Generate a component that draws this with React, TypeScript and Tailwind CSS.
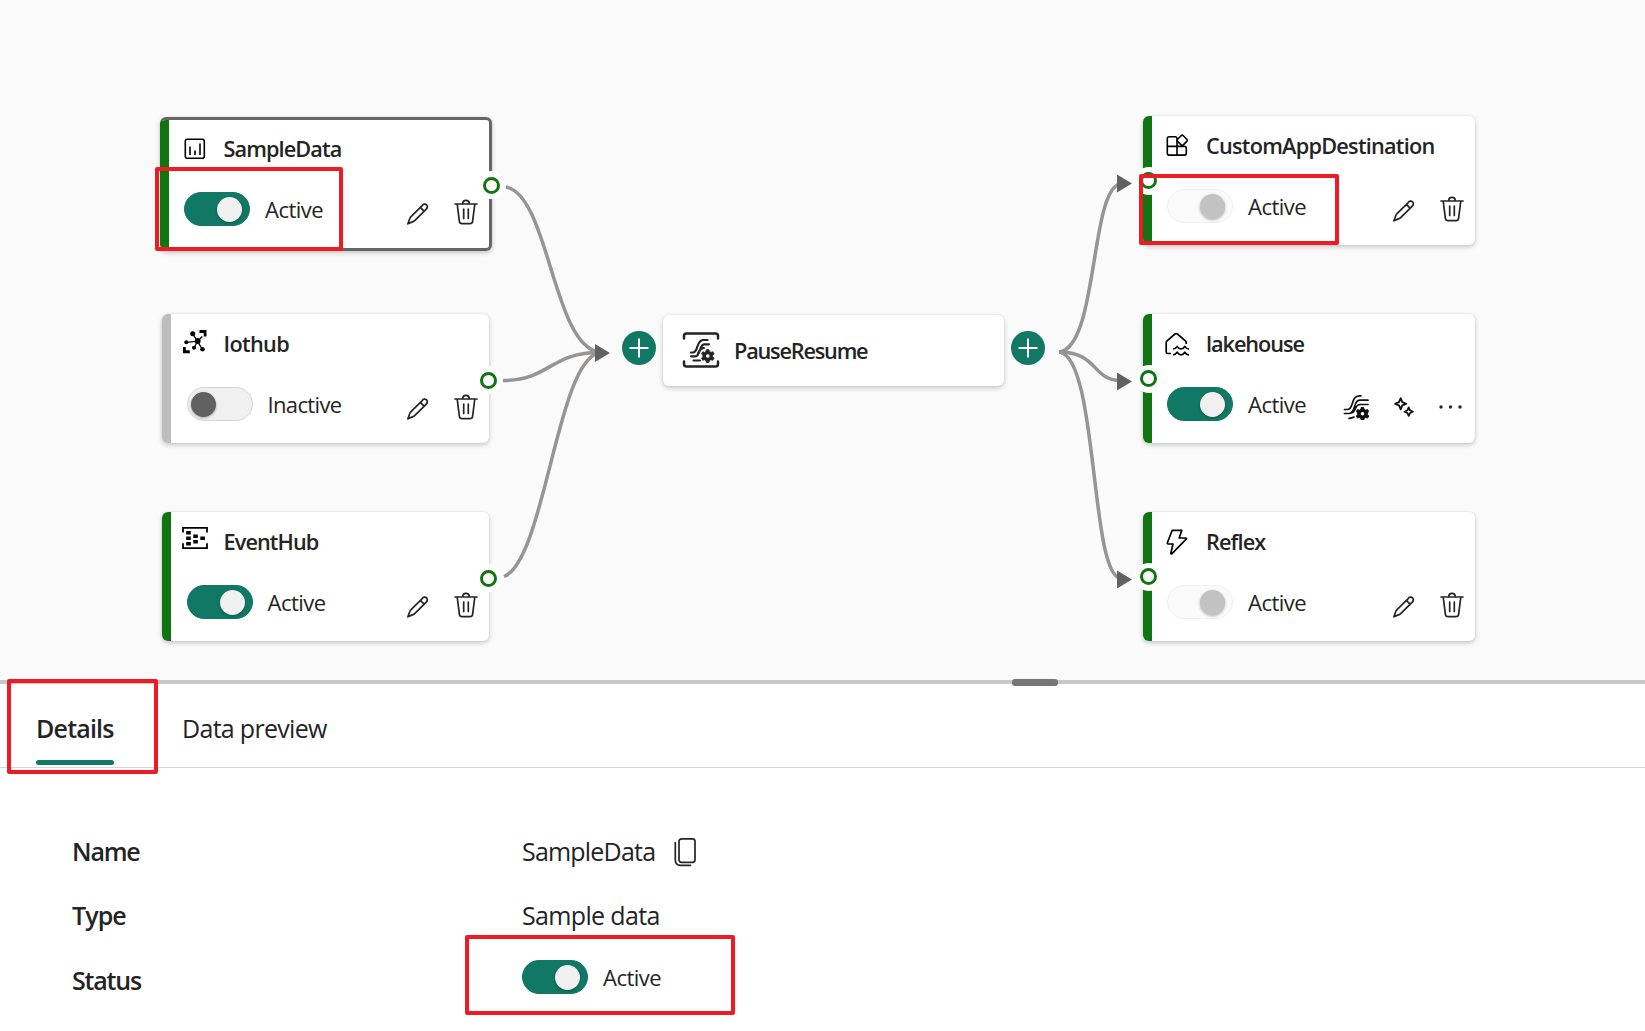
import React from "react";

type P = { className?: string };

const Pencil = ({ className }: P) => (
  <svg viewBox="0 0 22 22" width="22" height="22" className={`fill-none stroke-[#242424] ${className ?? ""}`} strokeWidth="1.7" strokeLinejoin="round">
    <path d="M15.2 2.6c1.1-1.6 3-2 4.3-.8 1.3 1.2 1.1 3-.2 4.3L7.7 17.6c-.5.5-1 .8-1.7 1L.9 20.8l1.9-5.3c.2-.7.5-1.1 1-1.6z" />
    <path d="M13.4 4.4l3.9 3.9" />
  </svg>
);

const Trash = ({ className }: P) => (
  <svg viewBox="0 0 24 26" width="24" height="26" className={`fill-none stroke-[#242424] ${className ?? ""}`} strokeWidth="1.7" strokeLinecap="round" strokeLinejoin="round">
    <path d="M1 5h22M8.7 4.8c0-2 1.4-3.4 3.3-3.4s3.3 1.4 3.3 3.4M3.2 5l2.2 17.3c.2 1.5 1.1 2.3 2.600 2.300h8c1.500 0 2.400-.8 2.600-2.300L20.800 5M9.700 10v9.500M14.300 10v9.500" />
  </svg>
);

const ChartIcon = () => (
  <svg viewBox="0 0 26 26" width="26" height="26" className="fill-none stroke-black" strokeWidth="1.6">
    <rect x="3.3" y="3.3" width="19" height="19" rx="2" />
    <path d="M8 10.5v8.5M13 14.5v4.5M18 7.5v11.5" />
  </svg>
);

const HubIcon = () => (
  <svg viewBox="0 0 26 26" width="26" height="26" className="fill-none stroke-black" strokeWidth="1.3">
    <path d="M10.5 4.5L15.5 12.3L4.5 13.3M15.5 12.3L12 19M15.5 12.3L20.5 20.5M15.5 12.3l4.8-4.8" />
    <g className="fill-black stroke-none">
      <circle cx="10.7" cy="4.7" r="2.5" /><circle cx="15.7" cy="12" r="2.9" /><circle cx="4.3" cy="13.3" r="2" />
      <circle cx="12" cy="18.8" r="2" /><circle cx="20.5" cy="20.3" r="2.3" />
      <path d="M17.5 1h7v6.5h-2.8V4h-4.2zM1 18h2.8v3.2h4v3H1z" />
    </g>
  </svg>
);

const EventIcon = () => (
  <svg viewBox="0 0 26 24" width="26" height="24" className="fill-none stroke-black" strokeWidth="1.8">
    <path d="M1 6.5V1.9h24v4.6M1 17.2v4.9h24v-4.9" />
    <path className="fill-black stroke-none" d="M4.2 5h4.6v3.4H4.2zM4.2 10.5h4.6v3.5H4.2zM4.2 16h4.6v3.4H4.2zM11.3 8.5h4.5v3.4h-4.5zM11.3 14h4.5v3.4h-4.5zM18.3 10.5h4.6v3.500h-4.600z" />
  </svg>
);

const gear = "M16.9 11.6h2.3l.5 1.8 1.5.8 1.9-.6 1.1 2-1.3 1.4v1.6l1.3 1.4-1.1 2-1.9-.5-1.5.8-.5 1.9h-2.3l-.6-1.9-1.4-.8-1.9.5-1.1-2 1.3-1.4v-1.6l-1.3-1.4 1.1-2 1.9.6 1.4-.8z";

const Gear = ({ at, tone }: { at: string; tone: string }) => (
  <g transform={at}>
    <path className={tone} strokeWidth="1" strokeLinejoin="round" d={gear} />
    <circle cx="18.05" cy="17.8" r="1.8" className="fill-white stroke-none" />
  </g>
);

const StreamIcon = () => (
  <svg viewBox="0 0 26 26" width="26" height="26" className="fill-none stroke-[#111]" strokeWidth="1.7" strokeLinecap="round">
    <path d="M1.500 15.500h3c6.500 0 3-13.700 12-13.700h1.500M1.500 19.500h4.500c7.500 0 3.500-13 10.500-13.300h8.500M10 18.500c3.500-4 2-7.800 7-8h8M6 24.300c2 0 3.500-.3 5-1.200" />
    <Gear at="translate(1.5 2)" tone="fill-[#111] stroke-[#111]" />
  </svg>
);

const ManageIcon = () => (
  <svg viewBox="0 0 38 38" width="38" height="38" className="fill-none stroke-[#242424]" strokeWidth="2.5" strokeLinecap="round">
    <path d="M2 7.500V5c0-1.500.8-2.500 2.500-2.500h29c1.700 0 2.500 1 2.500 2.500v2.500M2 30.500V33c0 1.500.8 2.500 2.500 2.500h29c1.700 0 2.500-1 2.500-2.500v-2.500" />
    <path strokeWidth="2.2" d="M9 21.500h2c5.500 0 3-12 10-12.500h4.500M9 25.300h4c6 0 4-11.500 9-12h5M16 22.500c2.500-3.500 1.500-5.200 6-5.500M11.500 29.500h6.500" />
    <Gear at="translate(7.7 7.2)" tone="fill-[#242424] stroke-[#242424]" />
  </svg>
);

const AppsIcon = () => (
  <svg viewBox="0 0 26 26" width="26" height="26" className="fill-none stroke-black" strokeWidth="1.6" strokeLinejoin="round">
    <path d="M13 13.400V5.600c0-1.100-.7-1.800-1.800-1.800H5.100c-1.100 0-1.800.7-1.800 1.800v14.700c0 1.100.7 1.800 1.800 1.800h15.400c1.100 0 1.800-.7 1.800-1.800v-5.100c0-1.100-.7-1.800-1.800-1.800H3.300M13 13.400v8.700" />
    <path d="M17.100 2.700c.7-.7 1.500-.7 2.200 0l3.500 3.500c.7.7.7 1.500 0 2.200l-3.500 3.500c-.7.7-1.500.7-2.200 0L13.600 8.400c-.7-.7-.7-1.500 0-2.200z" />
  </svg>
);

const LakeIcon = () => (
  <svg viewBox="0 0 26 26" width="26" height="26" className="fill-none stroke-black" strokeWidth="1.7" strokeLinejoin="round">
    <path d="M7 22.500H3.800c-1 0-1.600-.6-1.600-1.600v-9.300c0-.7.2-1.200.8-1.700l8-6.900c.9-.7 1.600-.7 2.400 0l8 6.900c.6.5.8 1 .8 1.700v1.500" />
    <path d="M9 18c2.200 0 3-1 4.200-2.600 1.200 1.700 2 2.600 3.800 2.600s2.700-1 3.800-2.600c1 1.700 2 2.600 4.200 2.600M9 23.800c2.200 0 3-1 4.200-2.600 1.200 1.700 2 2.600 3.800 2.600s2.700-1 3.800-2.600c1 1.700 2 2.600 4.200 2.600" />
  </svg>
);

const BoltIcon = () => (
  <svg viewBox="0 0 26 28" width="26" height="28" className="fill-none stroke-black" strokeWidth="1.7" strokeLinejoin="round">
    <path d="M8.200 2.300h9.600l-2.600 7.700h6.600c.7 0 .9.600.4 1.100L8 25.600c-.6.600-1.300.2-1.100-.6l2.100-9H4.200c-.7 0-1-.5-.8-1.200z" />
  </svg>
);

const SparkIcon = () => (
  <svg viewBox="0 0 20 20" width="20" height="20" className="fill-none stroke-[#111]" strokeWidth="1.8" strokeLinejoin="round">
    <path d="M6.700 1.200l1.600 3.900 3.900 1.700-3.900 1.600-1.600 3.900-1.700-3.900L1.100 6.800 5 5.100zM14.700 10.400l1.300 2.900 2.900 1.400-2.900 1.300-1.300 2.900-1.300-2.900-2.900-1.300 2.900-1.400z" />
  </svg>
);

const CopyIcon = () => (
  <svg viewBox="0 0 24 30" width="24" height="30" className="mt-[3px] fill-none stroke-[#242424]" strokeWidth="1.7" strokeLinecap="round">
    <rect x="6" y="1.8" width="16" height="23.5" rx="2.5" />
    <path d="M2.3 5.5v17.5c0 3.5 1.7 5.3 5.2 5.3h10" />
  </svg>
);

const Toggle = ({ kind }: { kind: "on" | "off" | "disabled" }) => {
  const track = kind === "on" ? "bg-[#117865] border-[#117865] justify-end" : kind === "off" ? "bg-[#f0f0f0] border-[#d6d6d6] justify-start" : "bg-[#fafafa] border-[#f0f0f0] justify-end";
  const knob = kind === "on" ? "bg-[#f0f0f0]" : kind === "off" ? "bg-[#616161]" : "bg-[#c2c2c2]";
  return (
    <div className={`flex h-[34px] w-[66px] shrink-0 items-center rounded-full border px-[3px] pt-[1px] ${kind === "off" ? "" : "pr-[7px]"} ${track}`}>
      <div className={`size-[25px] rounded-full shadow-[0_1px_3px_rgba(0,0,0,0.3)] ${knob}`} />
    </div>
  );
};

const Port = ({ className }: P) => (
  <div className={`absolute flex size-[28px] items-center justify-center rounded-full bg-white ${className ?? ""}`}>
    <div className="size-[17px] rounded-full border-[3px] border-[#107410] bg-white" />
  </div>
);

type NodeProps = {
  place: string;
  title: string;
  titleTrack: string;
  icon: React.ReactNode;
  iconPlace?: string;
  kind: "on" | "off" | "disabled";
  port: string;
  right?: boolean;
  selected?: boolean;
  more?: boolean;
};

const FlowNode = ({ place, title, titleTrack, icon, iconPlace, kind, port, right, selected, more }: NodeProps) => (
  <div className={`absolute rounded-[6px] bg-white shadow-[0_2px_5px_rgba(0,0,0,0.2),0_0_2px_rgba(0,0,0,0.1)] ${place}`}>
    <div className={`flex h-full overflow-hidden rounded-[6px] ${selected ? "border-[3px] border-l-0 border-[#666666]" : ""}`}>
      <div className={`shrink-0 ${selected ? "-my-[2px] w-[9px]" : "w-[9.5px]"} ${kind === "off" ? "bg-[#bdbdbd]" : "bg-[#107410]"}`} />
      <div className={`flex min-w-0 flex-1 flex-col ${right ? "pl-[15px]" : selected ? "-mt-[1px] pl-[15px]" : "pl-[15.5px]"}`}>
        <div className="flex h-[59px] items-center gap-[16px] pt-[1px]">
          <div className={`flex w-[26px] shrink-0 justify-center ${right ? "-ml-[3px]" : selected ? "-ml-[2.5px]" : "-ml-[5px]"} ${iconPlace ?? ""}`}>{icon}</div>
          <div className={`whitespace-nowrap text-[21.7px] leading-[30px] font-semibold ${titleTrack}`}>{title}</div>
        </div>
        <div className={`flex items-center ${selected ? "h-[61px]" : "h-[62px]"}`}>
          <Toggle kind={kind} />
          <div className={`ml-[15px] flex-1 whitespace-nowrap text-[22px] leading-[30px] ${kind === "off" ? "tracking-[-0.65px]" : "tracking-[-0.5px]"}`}>{kind === "off" ? "Inactive" : "Active"}</div>
          {more ? (
            <div className="mr-[13.5px] flex items-center gap-[25px] pt-[5px]">
              <StreamIcon />
              <SparkIcon />
              <svg viewBox="0 0 23 4" width="23" height="4" className="fill-[#242424]"><circle cx="2" cy="2" r="1.7" /><circle cx="11.5" cy="2" r="1.7" /><circle cx="21" cy="2" r="1.7" /></svg>
            </div>
          ) : (
            <div className={`flex items-center gap-[25px] ${selected ? "pt-[6px]" : "pt-[5px]"} mr-[11px]`}>
              <Pencil className="mt-[4px]" />
              <Trash />
            </div>
          )}
        </div>
      </div>
    </div>
    <Port className={port} />
  </div>
);

const AddButton = ({ className }: P) => (
  <div className={`absolute flex size-[34px] items-center justify-center rounded-full bg-[#117865] ${className ?? ""}`}>
    <svg viewBox="0 0 20 20" width="20" height="20" className="stroke-white" strokeWidth="2"><path d="M10 .5v19M.5 10h19" /></svg>
  </div>
);

const Mark = ({ className }: P) => <div className={`pointer-events-none absolute rounded-[2px] border-[4px] border-[#ed1c24] ${className ?? ""}`} />;

export default function App() {
  return (
    <div className="relative flex h-[1031px] w-[1645px] flex-col overflow-hidden bg-white font-['Open_Sans','Noto_Sans',sans-serif] text-[#242424]">
      <main className="relative h-[680px] shrink-0 bg-[#fafafa]">
        <svg viewBox="0 0 1645 680" width="1645" height="680" className="absolute inset-0 fill-none stroke-[#979593]" strokeWidth="3.5">
          <path d="M506 187C549 195 553 346 599 352M503 380.500C550 380 550 353 598 352.500M504 576.500C545 560 557 361 599 353" />
          <path d="M1059 352C1098 348 1090 190 1120 184M1059 352C1098 352 1092 380 1120 380.500M1059 352C1098 356 1090 573 1120 578" />
          <path className="fill-[#616161] stroke-none" d="M595 344l15 9-15 9zM1117 174.500l15 9-15 9zM1117 372.500l15 9-15 9zM1117 570.500l15 9-15 9z" />
        </svg>
        <FlowNode place="left-[160px] top-[117px] h-[134px] w-[332px]" title="SampleData" titleTrack="tracking-[-0.9px]" icon={<ChartIcon />} kind="on" selected port="left-[317px] top-[54px]" />
        <FlowNode place="left-[161.5px] top-[314px] h-[129px] w-[327.5px]" title="Iothub" titleTrack="tracking-[-0.65px]" icon={<HubIcon />} iconPlace="-mt-[4px]" kind="off" port="left-[312.5px] top-[52px]" />
        <FlowNode place="left-[161.5px] top-[512px] h-[129px] w-[327.5px]" title="EventHub" titleTrack="tracking-[-0.9px]" icon={<EventIcon />} iconPlace="-mt-[8px]" kind="on" port="left-[312.5px] top-[52px]" />
        <div className="absolute left-[663px] top-[314.5px] flex h-[71.5px] w-[341px] items-center gap-[14px] rounded-[6px] bg-white pl-[19px] shadow-[0_2px_5px_rgba(0,0,0,0.2),0_0_2px_rgba(0,0,0,0.1)]">
          <ManageIcon />
          <div className="pt-[1px] text-[21.7px] leading-[30px] font-semibold tracking-[-1.2px]">PauseResume</div>
        </div>
        <AddButton className="left-[622px] top-[331px]" />
        <AddButton className="left-[1011px] top-[331px]" />
        <FlowNode place="left-[1142.5px] top-[116px] h-[129px] w-[332.5px]" title="CustomAppDestination" titleTrack="tracking-[-0.75px]" icon={<AppsIcon />} kind="disabled" right port="left-[-8px] top-[50.5px]" />
        <FlowNode place="left-[1142.5px] top-[314px] h-[129px] w-[332.5px]" title="lakehouse" titleTrack="tracking-[-1.05px]" icon={<LakeIcon />} kind="on" right more port="left-[-8px] top-[50.5px]" />
        <FlowNode place="left-[1142.5px] top-[512px] h-[129px] w-[332.5px]" title="Reflex" titleTrack="tracking-[-0.9px]" icon={<BoltIcon />} iconPlace="-mt-[1px]" kind="disabled" right port="left-[-8px] top-[50.5px]" />
      </main>
      <div className="relative h-[4px] shrink-0 bg-[#c8c8c8]">
        <div className="absolute -top-[1px] left-[1012px] h-[7px] w-[46px] rounded-[3px] bg-[#767676]" />
      </div>
      <nav className="flex h-[84px] shrink-0 gap-[68px] border-b border-[#d6d6d6] pl-[36px] text-[25px] leading-[34px]">
        <div className="flex w-[78px] flex-col justify-between pt-[27px] pb-[2px] whitespace-nowrap">
          <div className="font-semibold tracking-[-0.8px]">Details</div>
          <div className="h-[5px] rounded-full bg-[#117865]" />
        </div>
        <div className="pt-[27px] tracking-[-0.7px]">Data preview</div>
      </nav>
      <section className="grid grid-cols-[450px_1fr] pt-[66px] pl-[72px] text-[25px] leading-[34px]">
        <div className="h-[64px] font-semibold tracking-[-1.2px]">Name</div>
        <div className="flex h-[64px] gap-[17.5px]"><span className="tracking-[-0.8px]">SampleData</span><CopyIcon /></div>
        <div className="h-[65px] font-semibold tracking-[-0.9px]">Type</div>
        <div className="h-[65px] tracking-[-0.65px]">Sample data</div>
        <div className="font-semibold tracking-[-1.2px]">Status</div>
        <div className="-mt-[4px] flex h-[35px] items-center gap-[15px]">
          <Toggle kind="on" />
          <span className="text-[22px] tracking-[-0.5px]">Active</span>
        </div>
      </section>
      <Mark className="left-[155px] top-[167px] h-[84px] w-[188px]" />
      <Mark className="left-[1139px] top-[174px] h-[71px] w-[200px]" />
      <Mark className="left-[7px] top-[679px] h-[95px] w-[151px]" />
      <Mark className="left-[465px] top-[935px] h-[80px] w-[270px]" />
    </div>
  );
}
